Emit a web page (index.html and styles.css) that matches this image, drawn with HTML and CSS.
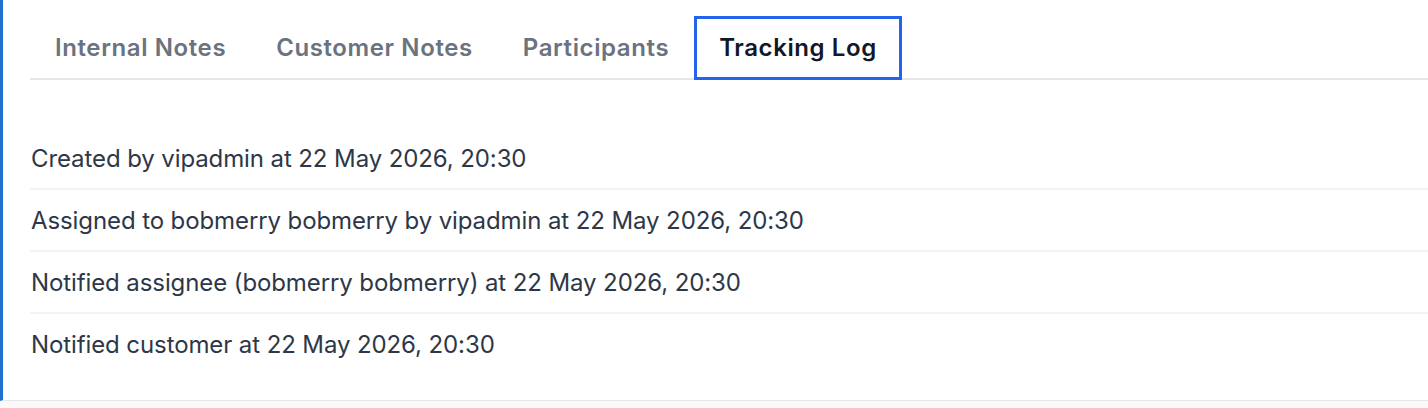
FILE: index.html
```html
<!DOCTYPE html>
<html lang="en">

<head>
    <meta charset="UTF-8" />
    <meta name="viewport" content="width=device-width, initial-scale=1.0" />
    <title>Ticket Tracking Log</title>

    <link rel="stylesheet" href="styles.css">
</head>

<body>
    <section class="card">
        <nav class="tabs">
            <button type="button" class="tab">Internal Notes</button>
            <button type="button" class="tab">Customer Notes</button>
            <button type="button" class="tab">Participants</button>
            <button type="button" class="tab active">Tracking Log</button>
        </nav>
        <ul class="log">
            <li>Created by vipadmin at 22 May 2026, 20:30</li>
            <li>Assigned to bobmerry bobmerry by vipadmin at 22 May 2026, 20:30</li>
            <li>Notified assignee (bobmerry bobmerry) at 22 May 2026, 20:30</li>
            <li>Notified customer at 22 May 2026, 20:30</li>
        </ul>
    </section>
</body>

</html>
```

FILE: styles.css
```css
* {
    margin: 0;
    padding: 0;
    box-sizing: border-box;
}

html {
    font-family: Inter, "Noto Sans", sans-serif;
}

body {
    background: #fafafa;
}

.card {
    background: #fff;
    border-left: 3px solid #1f6fd1;
    border-bottom: 1px solid #e5e7eb;
    padding-left: 27px;
}

.tabs {
    border-bottom: 2px solid #e5e7eb;
    display: flex;
    padding-top: 16px;
}

.tab {
    background: none;
    border: 3px solid transparent;
    color: #6b7280;
    font-family: inherit;
    font-size: 24px;
    font-weight: 600;
    height: 64px;
    letter-spacing: 0.6px;
    margin-bottom: -2px;
    padding: 0 22px 2px;
}

.tab.active {
    border-color: #2563eb;
    color: #111827;
}

.log {
    list-style: none;
    padding: 48px 0 26px;
}

.log li {
    border-bottom: 2px solid #f2f3f5;
    color: #2d3748;
    font-size: 24px;
    letter-spacing: -0.1px;
    line-height: 30px;
    padding: 16px 0 14px 1px;
}

.log li:last-child {
    border-bottom: none;
}
```
